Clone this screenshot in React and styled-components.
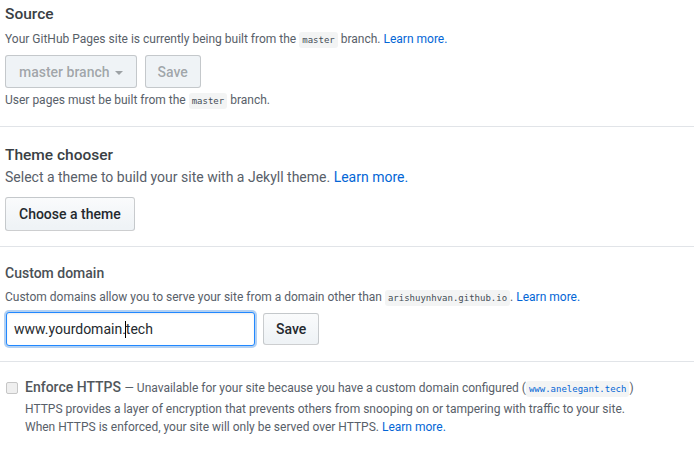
import React from 'react';
import styled, { createGlobalStyle } from 'styled-components';

const GlobalStyle = createGlobalStyle`
  html, body { margin: 0; padding: 0; background: #fff; }
  body {
    font-family: Roboto, "Noto Sans", "Liberation Sans", sans-serif;
    color: #586069;
    -webkit-font-smoothing: antialiased;
  }
  * { box-sizing: border-box; }
`;

const Page = styled.div`
  width: 694px;
`;

const Section = styled.section`
  padding: ${(p) => p.$pad || '0 0 0 5px'};
  border-bottom: 1px solid #e1e4e8;
`;

const Heading = styled.h3`
  margin: ${(p) => p.$mt || 0}px 0 0;
  font-size: ${(p) => p.$size || 15.5}px;
  line-height: 20px;
  font-weight: 500;
  color: ${(p) => p.$color || '#3a3f44'};
`;

const Note = styled.p`
  margin: ${(p) => p.$mt || 0}px 0 0;
  font-size: ${(p) => p.$size || 12}px;
  line-height: ${(p) => (p.$size === 14 ? 21 : 18)}px;
  color: #586069;
  white-space: nowrap;
`;

const Code = styled.code`
  font-family: "DejaVu Sans Mono", "Liberation Mono", monospace;
  font-size: 9px;
  line-height: 1;
  padding: 3px 3px;
  border-radius: 3px;
  background: rgba(27, 31, 35, 0.05);
  color: ${(p) => (p.$link ? '#0366d6' : '#444d56')};
`;

const Link = styled.a`
  color: #0366d6;
  text-decoration: none;
`;

const Row = styled.div`
  display: flex;
  align-items: center;
  gap: 8px;
  margin-top: ${(p) => p.$mt || 0}px;
`;

const Button = styled.button`
  display: inline-flex;
  align-items: center;
  gap: 5px;
  height: ${(p) => p.$h || 34}px;
  padding: 0 ${(p) => p.$px || 13}px;
  font-family: inherit;
  font-size: 14px;
  font-weight: 500;
  color: ${(p) => (p.disabled ? 'rgba(36,41,46,0.4)' : '#24292e')};
  background: ${(p) =>
    p.disabled ? '#eff3f6' : 'linear-gradient(-180deg, #fafbfc 0%, #eff3f6 90%)'};
  border: 1px solid rgba(27, 31, 35, 0.2);
  border-radius: 3px;
  cursor: ${(p) => (p.disabled ? 'default' : 'pointer')};
`;

const Caret = styled.span`
  display: inline-block;
  width: 0;
  height: 0;
  margin-top: 2px;
  border-left: 4px solid transparent;
  border-right: 4px solid transparent;
  border-top: 4px solid currentColor;
`;

const DomainField = styled.div`
  width: 249px;
  height: 34px;
  margin-left: 1px;
  padding: 0 7px;
  display: flex;
  align-items: center;
  font-size: 14px;
  color: #24292e;
  background: #fff;
  border: 1px solid #2188ff;
  border-radius: 3px;
  box-shadow: inset 0 1px 2px rgba(27, 31, 35, 0.075), 0 0 0 2px rgba(3, 102, 214, 0.3);
  white-space: pre;
`;

const TextCursor = styled.span`
  display: inline-block;
  width: 1px;
  height: 17px;
  margin: 0 -0.5px;
  background: #000;
`;

const CheckRow = styled.label`
  display: flex;
  align-items: center;
  gap: 7px;
  margin: 15px 0 0 1px;
  white-space: nowrap;
`;

const CheckBox = styled.span`
  width: 12px;
  height: 12px;
  flex: none;
  border: 1px solid #c6c6c6;
  border-radius: 2px;
  background: #efefef;
`;

const CheckLabel = styled.span`
  font-size: 14px;
  line-height: 20px;
  font-weight: 500;
  color: #51575c;
`;

const Dash = styled.span`
  font-size: 12px;
  font-weight: 400;
  color: #586069;
`;

const Details = styled.div`
  margin: 2px 0 0 20px;
`;

export default function App() {
  return (
    <Page>
      <GlobalStyle />
      <Section $pad="0 0 17px 5px">
        <Heading $mt={4}>Source</Heading>
        <Note $mt={6}>
          Your GitHub Pages site is currently being built from the <Code>master</Code> branch.{' '}
          <Link href="#">Learn more.</Link>
        </Note>
        <Row $mt={7}>
          <Button disabled $h={33}>
            master branch <Caret />
          </Button>
          <Button disabled $h={33} $px={12}>
            Save
          </Button>
        </Row>
        <Note $mt={3}>
          User pages must be built from the <Code>master</Code> branch.
        </Note>
      </Section>

      <Section $pad="0 0 15px 5px">
        <Heading $mt={18}>Theme chooser</Heading>
        <Note $mt={2} $size={14}>
          Select a theme to build your site with a Jekyll theme. <Link href="#">Learn more.</Link>
        </Note>
        <Row $mt={9}>
          <Button>Choose a theme</Button>
        </Row>
      </Section>

      <Section $pad="0 0 15px 5px">
        <Heading $mt={16} $size={14} $color="#4a5056">
          Custom domain
        </Heading>
        <Note $mt={5}>
          Custom domains allow you to serve your site from a domain other than{' '}
          <Code>arishuynhvan.github.io</Code>. <Link href="#">Learn more.</Link>
        </Note>
        <Row $mt={6}>
          <DomainField role="textbox">
            www.yourdomain.<TextCursor />tech
          </DomainField>
          <Button $h={32} $px={12}>
            Save
          </Button>
        </Row>
      </Section>

      <Section $pad="0 0 24px 5px">
        <CheckRow>
          <CheckBox />
          <CheckLabel>
            Enforce HTTPS <Dash>— Unavailable for your site because you have a custom domain configured (<Code $link>www.anelegant.tech</Code>)</Dash>
          </CheckLabel>
        </CheckRow>
        <Details>
          <Note>
            HTTPS provides a layer of encryption that prevents others from snooping on or tampering with traffic to your site.
          </Note>
          <Note>
            When HTTPS is enforced, your site will only be served over HTTPS. <Link href="#">Learn more.</Link>
          </Note>
        </Details>
      </Section>
    </Page>
  );
}
